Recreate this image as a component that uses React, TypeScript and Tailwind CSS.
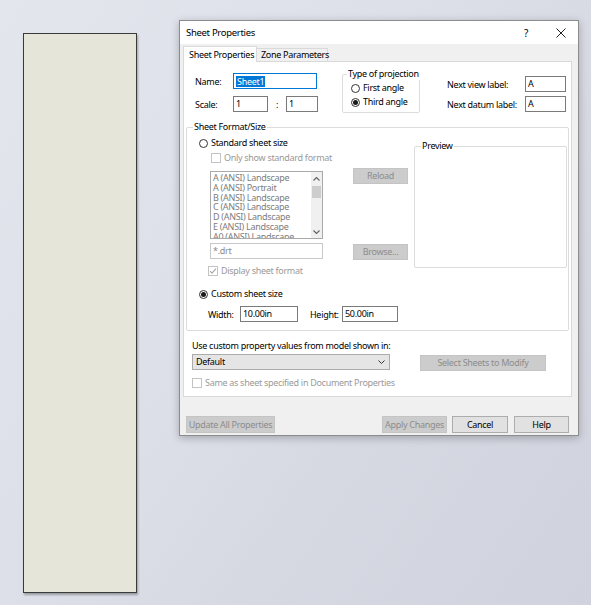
import React from "react";

const Radio = ({ checked, label }: { checked?: boolean; label: string }) => (
  <div className="flex items-center h-[12px] gap-[3px]">
    <span className="w-[9px] h-[9px] shrink-0 rounded-full border border-[#333333] bg-white flex items-center justify-center">
      {checked ? <span className="w-[5px] h-[5px] rounded-full bg-[#1a1a1a]" /> : null}
    </span>
    <span className="leading-[12px] text-black whitespace-nowrap">{label}</span>
  </div>
);

const Check = ({ checked, label, className = "" }: { checked?: boolean; label: string; className?: string }) => (
  <div className={`flex items-center h-[12px] gap-[3px] whitespace-nowrap ${className}`}>
    <span className="w-[10px] h-[10px] shrink-0 border border-[#c4c4c4] bg-white flex items-center justify-center">
      {checked ? (
        <svg width="8" height="8" viewBox="0 0 8 8">
          <path d="M1 4.2 L3 6.2 L7 1.6" fill="none" stroke="#a8a8a8" strokeWidth="1.1" />
        </svg>
      ) : null}
    </span>
    <span className="leading-[12px] text-[#9a9a9a]">{label}</span>
  </div>
);

const Input = ({ w, value, gray }: { w: string; value: string; gray?: boolean }) => (
  <div className={`${w} h-[16px] shrink-0 border bg-white flex items-center pl-[2px] leading-[12px] ${gray ? "border-[#c8c8c8] text-[#8a8a8a]" : "border-[#7a7a7a] text-black"}`}>
    {value}
  </div>
);

const DisBtn = ({ w, label, h = "h-[16px]" }: { w: string; label: string; h?: string }) => (
  <div className={`${w} ${h} bg-[#cccccc] border border-[#c4c4c4] flex items-center justify-center text-[#8c8c8c] leading-[12px]`}>
    {label}
  </div>
);

const Btn = ({ w, label }: { w: string; label: string }) => (
  <div className={`${w} h-[17px] bg-[#e1e1e1] border border-[#adadad] flex items-center justify-center text-black leading-[12px]`}>
    {label}
  </div>
);

const items = [
  "A (ANSI) Landscape",
  "A (ANSI) Portrait",
  "B (ANSI) Landscape",
  "C (ANSI) Landscape",
  "D (ANSI) Landscape",
  "E (ANSI) Landscape",
  "A0 (ANSI) Landscape",
];

export default function App() {
  return (
    <div className="w-[591px] h-[605px] overflow-hidden flex items-start whitespace-nowrap bg-[linear-gradient(125deg,#e4e6ee_0%,#dcdfe8_45%,#d6d9e2_65%,#d0d3dd_100%)] font-['Noto_Sans',sans-serif] text-[9px] tracking-[-0.3px] text-black">
      {/* drawing sheet */}
      <div className="ml-[23px] mt-[33px] w-[114px] h-[560px] bg-[#e5e5da] border border-[#3a3a3a] shadow-[1px_2px_2px_rgba(0,0,0,0.3)]" />

      {/* dialog */}
      <div className="ml-[42px] mt-[20px] w-[400px] h-[416px] bg-[#f0f0f0] border border-[#8c8c8c] shadow-[0_2px_8px_rgba(0,0,0,0.25)] flex flex-col">
        {/* title bar */}
        <div className="h-[23px] bg-white flex items-center pl-[6px] pt-[1px]">
          <span className="text-[9.5px] leading-[12px]">Sheet Properties</span>
          <span className="ml-auto mr-[28px] text-[10px] leading-[12px]">?</span>
          <svg width="10" height="10" viewBox="0 0 10 10" className="mr-[12px]">
            <path d="M0.5 0.5 L9.5 9.5 M9.5 0.5 L0.5 9.5" stroke="#222" strokeWidth="1" />
          </svg>
        </div>

        {/* tabs */}
        <div className="mt-[2px] pl-[3px] flex items-start">
          <div className="relative z-10 -mb-px w-[74px] h-[16px] bg-white border border-b-0 border-[#d9d9d9] flex items-center pl-[5px] leading-[12px]">
            Sheet Properties
          </div>
          <div className="mt-[2px] w-[71px] h-[13px] bg-[#f0f0f0] border border-b-0 border-l-0 border-[#d9d9d9] flex items-center pl-[4px] leading-[12px]">
            Zone Parameters
          </div>
        </div>

        {/* panel */}
        <div className="ml-[3px] w-[389px] h-[336px] bg-white border border-[#d9d9d9] flex flex-col">
          {/* top section */}
          <div className="mt-[11px] ml-[11px] h-[40px] flex items-start">
            <div className="flex flex-col gap-[7px]">
              <div className="flex items-center h-[16px]">
                <span className="w-[38px] leading-[12px] pt-[2px]">Name:</span>
                <div className="w-[84px] h-[16px] border border-[#0078d7] bg-white flex items-center pl-[2px]">
                  <span className="bg-[#0078d7] text-white leading-[11px] px-[1px]">Sheet1</span>
                </div>
              </div>
              <div className="flex items-center h-[16px]">
                <span className="w-[38px] leading-[12px] pt-[1px]">Scale:</span>
                <Input w="w-[35px]" value="1" />
                <span className="w-[18px] text-center leading-[12px] pt-[1px]">:</span>
                <Input w="w-[32px]" value="1" />
              </div>
            </div>

            <div className="relative ml-[24px] mt-[1px] w-[78px] h-[39px] shrink-0 border border-[#dcdcdc] rounded-[2px] flex flex-col pl-[8px] pt-[7px] gap-[2px]">
              <span className="absolute -top-[7px] left-[4px] bg-white px-[1px] leading-[12px]">Type of projection</span>
              <Radio label="First angle" />
              <Radio label="Third angle" checked />
            </div>

            <div className="ml-[27px] mt-[3px] flex flex-col gap-[4px]">
              <div className="flex items-center h-[16px]">
                <span className="w-[78px] leading-[12px] pt-[1px]">Next view label:</span>
                <Input w="w-[41px]" value="A" />
              </div>
              <div className="flex items-center h-[16px]">
                <span className="w-[78px] leading-[12px] pt-[1px]">Next datum label:</span>
                <Input w="w-[41px]" value="A" />
              </div>
            </div>
          </div>

          {/* Sheet Format/Size group */}
          <div className="relative mt-[14px] ml-[2px] w-[383px] h-[204px] border border-[#dcdcdc] rounded-[2px] pl-[12px] flex flex-col">
            <span className="absolute -top-[7px] left-[6px] bg-white px-[1px] leading-[12px]">Sheet Format/Size</span>
            <div className="flex items-start">
              <div className="w-[124px] shrink-0 flex flex-col">
                <div className="mt-[9px]">
                  <Radio label="Standard sheet size" />
                </div>
                <Check label="Only show standard format" className="mt-[3px] ml-[12px]" />
                <div className="mt-[7px] ml-[11px] w-[113px] h-[68px] border border-[#a9a9a9] bg-white flex">
                  <div className="flex-1 overflow-hidden pt-[1px] pl-[2px] flex flex-col text-[#7d7d7d]">
                    {items.map((it) => (
                      <span key={it} className="h-[9.75px] shrink-0 leading-[9.75px] whitespace-nowrap">
                        {it}
                      </span>
                    ))}
                  </div>
                  <div className="w-[11px] bg-[#f0f0f0] flex flex-col items-center">
                    <svg width="9" height="10" viewBox="0 0 9 10" className="mt-[2px]">
                      <path d="M1.5 6.5 L4.5 3.5 L7.5 6.5" fill="none" stroke="#606060" strokeWidth="1.1" />
                    </svg>
                    <div className="mt-[2px] w-[9px] h-[12px] bg-[#cdcdcd]" />
                    <svg width="9" height="10" viewBox="0 0 9 10" className="mt-auto mb-[1px]">
                      <path d="M1.5 3.5 L4.5 6.5 L7.5 3.5" fill="none" stroke="#606060" strokeWidth="1.1" />
                    </svg>
                  </div>
                </div>
                <div className="mt-[4px] ml-[11px]">
                  <Input w="w-[113px]" value="*.drt" gray />
                </div>
                <Check label="Display sheet format" checked className="mt-[6px] ml-[9px]" />
              </div>

              <div className="ml-[30px] w-[55px] shrink-0 flex flex-col">
                <div className="mt-[40px]">
                  <DisBtn w="w-[55px]" label="Reload" />
                </div>
                <div className="mt-[60px]">
                  <DisBtn w="w-[55px]" label="Browse..." />
                </div>
              </div>

              <div className="relative ml-[6px] mt-[18px] w-[153px] h-[122px] shrink-0 border border-[#dcdcdc] rounded-[2px]">
                <span className="absolute -top-[7px] left-[6px] bg-white px-[1px] leading-[12px]">Preview</span>
              </div>
            </div>

            <div className="mt-[11px]">
              <Radio label="Custom sheet size" checked />
            </div>
            <div className="mt-[6px] ml-[9px] flex items-center h-[16px]">
              <span className="w-[32px] leading-[12px] pt-[1px]">Width:</span>
              <Input w="w-[58px]" value="10.00in" />
              <span className="ml-[12px] w-[32px] leading-[12px] pt-[1px]">Height:</span>
              <Input w="w-[56px]" value="50.00in" />
            </div>
          </div>

          {/* bottom of panel */}
          <div className="mt-[9px] ml-[8px] h-[12px] leading-[12px]">Use custom property values from model shown in:</div>
          <div className="mt-[2px] ml-[8px] flex items-start">
            <div className="w-[198px] h-[16px] bg-[#e5e5e5] border border-[#acacac] flex items-center pl-[3px] leading-[12px]">
              <span>Default</span>
              <svg width="9" height="8" viewBox="0 0 9 8" className="ml-auto mr-[3px]">
                <path d="M1.5 2.5 L4.5 5.5 L7.5 2.5" fill="none" stroke="#333" strokeWidth="1" />
              </svg>
            </div>
            <div className="ml-[30px] mt-[1px]">
              <DisBtn w="w-[126px]" label="Select Sheets to Modify" />
            </div>
          </div>
          <Check label="Same as sheet specified in Document Properties" className="mt-[6px] ml-[8px]" />
        </div>

        {/* bottom buttons */}
        <div className="mt-[19px] pl-[6px] pr-[9px] flex items-center">
          <DisBtn w="w-[89px]" h="h-[17px]" label="Update All Properties" />
          <div className="ml-auto flex items-center">
            <DisBtn w="w-[65px]" h="h-[17px]" label="Apply Changes" />
            <div className="ml-[5px]">
              <Btn w="w-[56px]" label="Cancel" />
            </div>
            <div className="ml-[6px]">
              <Btn w="w-[55px]" label="Help" />
            </div>
          </div>
        </div>
      </div>
    </div>
  );
}
